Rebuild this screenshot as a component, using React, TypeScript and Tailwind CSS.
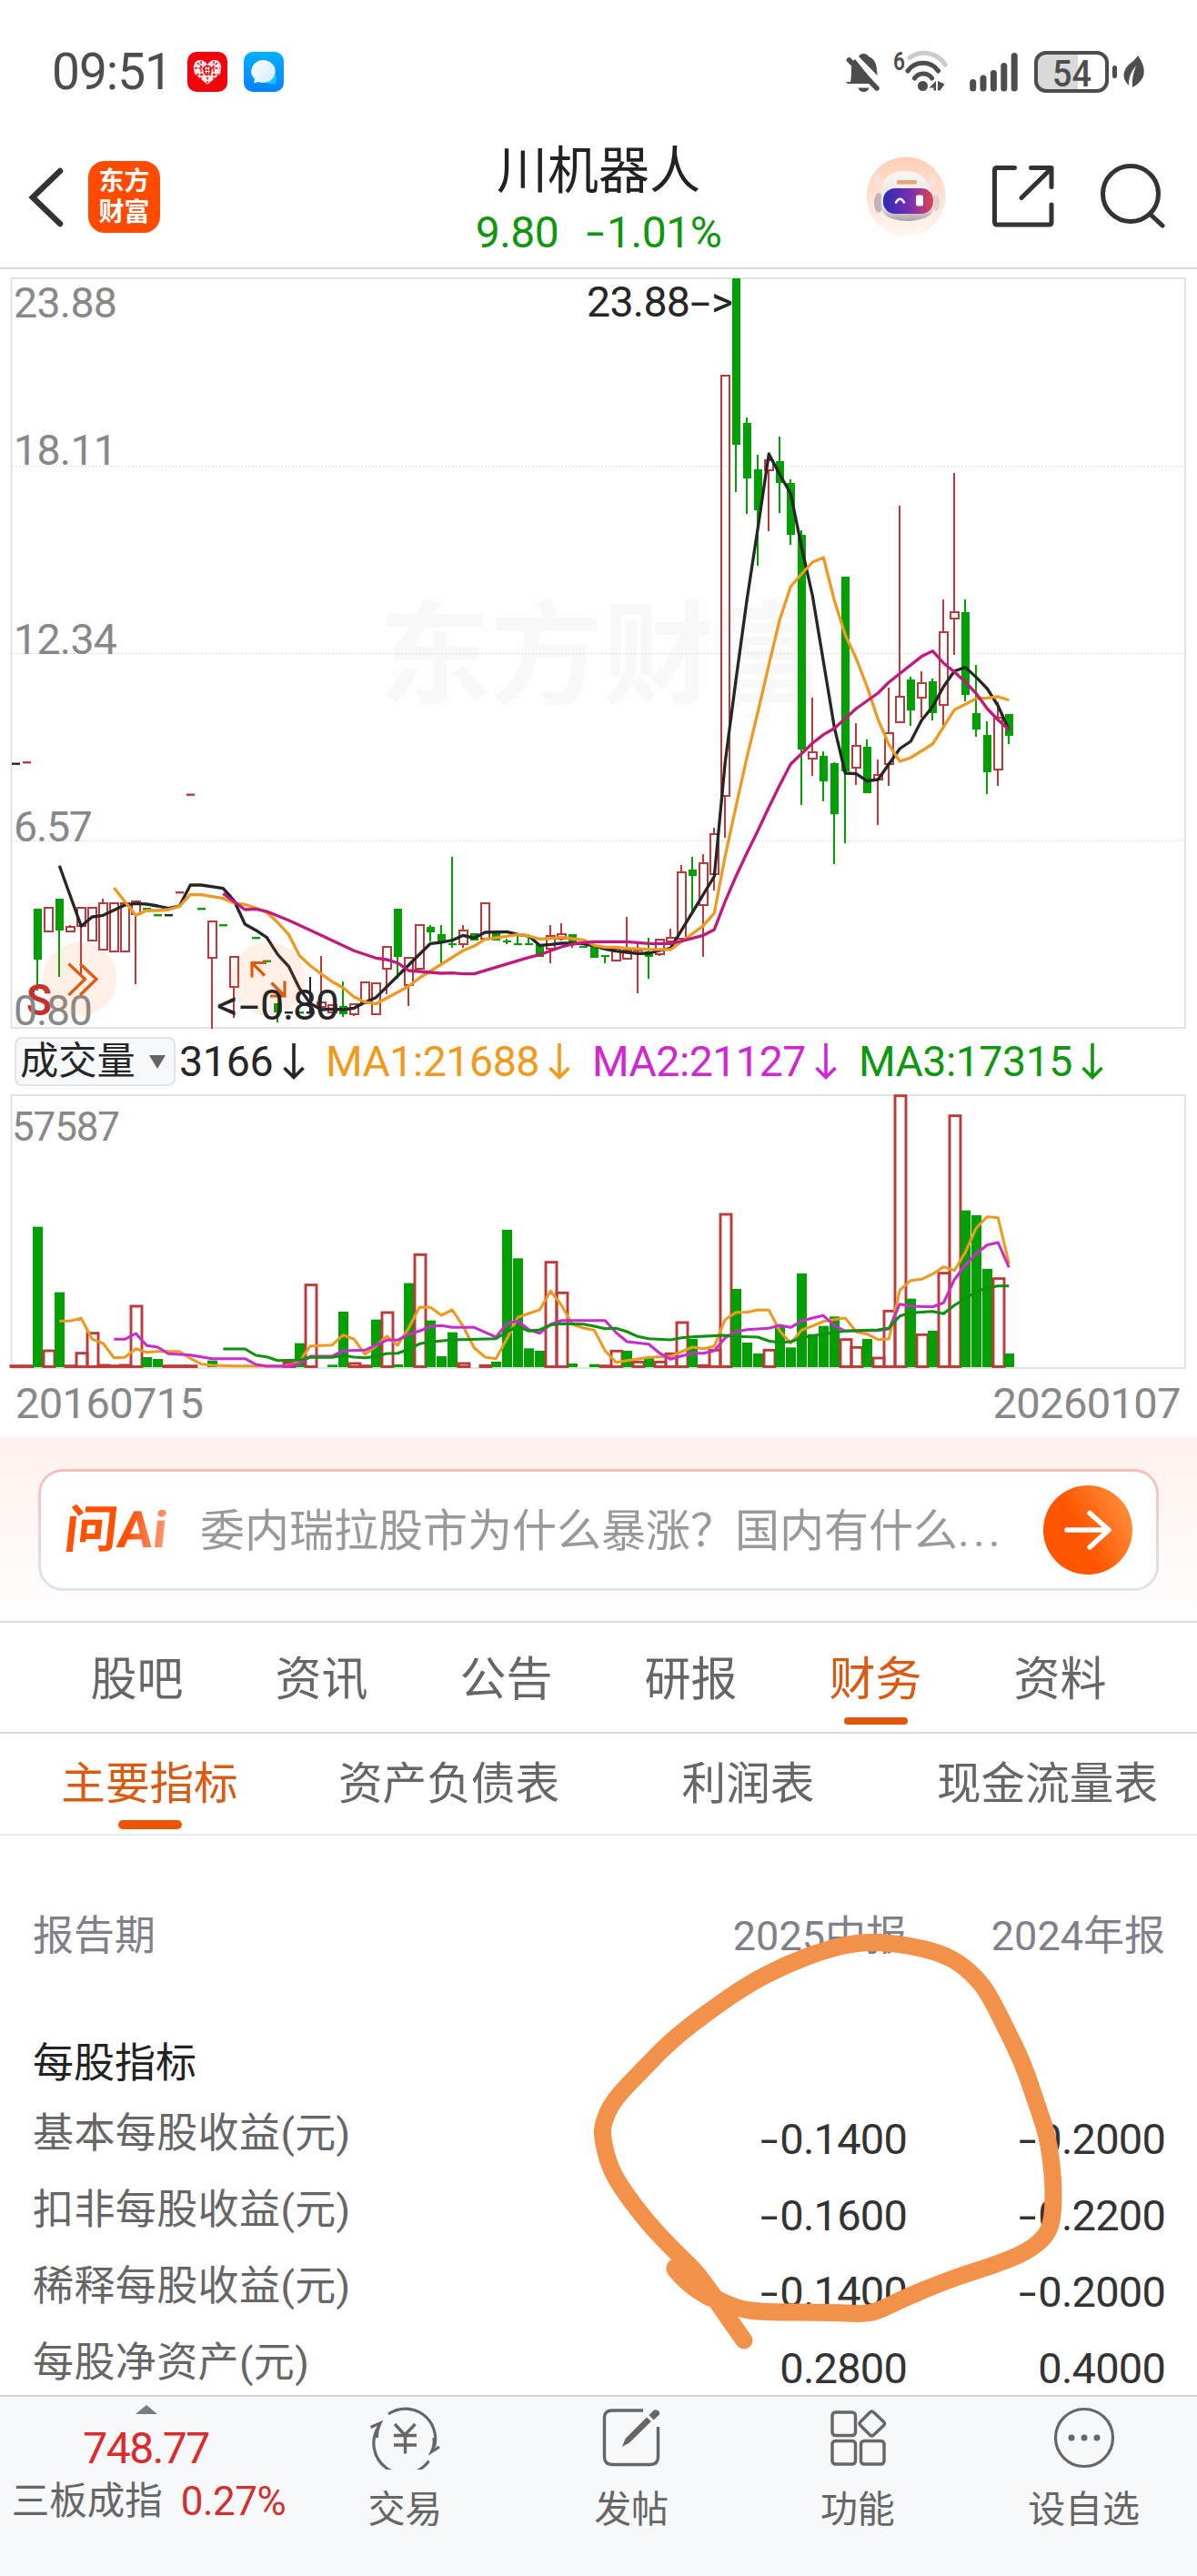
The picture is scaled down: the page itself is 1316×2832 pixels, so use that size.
import React from "react";

const RED = "#bb3b3b";
const GREEN = "#03a003";
const DARK = "#262626";

const px = (i: number) => 17 + 12 * i;

type Candle = [number, "r" | "g", number, number, number, number];

// index, colour, high, body top, body bottom, low
const candles: Candle[] = [
  [2, "g", 999, 999, 1055, 1089], [3, "r", 998, 998, 1024, 1024], [4, "g", 988, 988, 1023, 1074],
  [5, "r", 1017, 1019, 1024, 1024], [6, "r", 998, 998, 1018, 1073], [7, "r", 998, 998, 1034, 1034],
  [8, "r", 988, 993, 1044, 1044], [9, "r", 993, 993, 1046, 1046], [10, "r", 993, 993, 1046, 1046],
  [11, "r", 991, 991, 1005, 1082], [18, "r", 1013, 1013, 1053, 1131], [20, "r", 1052, 1052, 1085, 1119],
  [24, "g", 1103, 1103, 1113, 1124], [28, "r", 1051, 1102, 1107, 1107], [29, "r", 1105, 1105, 1113, 1113],
  [30, "g", 1079, 1106, 1115, 1118], [31, "r", 1104, 1104, 1115, 1117], [32, "r", 1080, 1080, 1103, 1103],
  [33, "r", 1081, 1081, 1115, 1115], [34, "r", 1041, 1041, 1065, 1093], [35, "g", 999, 999, 1052, 1076],
  [36, "r", 1053, 1053, 1083, 1106], [37, "r", 1017, 1017, 1065, 1065], [38, "g", 1017, 1019, 1025, 1035],
  [39, "g", 1017, 1027, 1036, 1059], [40, "g", 942, 1037, 1039, 1042], [41, "r", 1017, 1023, 1038, 1042],
  [42, "g", 1026, 1026, 1034, 1034], [43, "r", 993, 993, 1032, 1032], [44, "g", 1026, 1026, 1034, 1034],
  [45, "g", 1032, 1034, 1036, 1038], [46, "g", 1026, 1037, 1039, 1039], [47, "g", 1027, 1037, 1039, 1039],
  [48, "g", 1038, 1038, 1052, 1052], [49, "r", 1017, 1029, 1043, 1059], [50, "r", 1015, 1027, 1032, 1034],
  [51, "g", 1027, 1027, 1039, 1042], [52, "g", 1040, 1040, 1042, 1042], [53, "g", 1039, 1039, 1053, 1053],
  [54, "g", 1050, 1050, 1052, 1059], [55, "r", 1043, 1043, 1056, 1056], [56, "r", 1008, 1045, 1054, 1054],
  [57, "r", 1038, 1044, 1045, 1092], [58, "g", 1031, 1046, 1052, 1076], [59, "r", 1033, 1033, 1049, 1051],
  [60, "r", 1021, 1031, 1035, 1035], [61, "r", 951, 959, 1032, 1032], [62, "g", 942, 956, 963, 1002],
  [63, "r", 939, 949, 995, 1052], [64, "r", 910, 917, 961, 979], [65, "r", 413, 413, 875, 921],
  [66, "g", 306, 306, 489, 541], [67, "g", 459, 465, 526, 565], [68, "g", 500, 516, 561, 622],
  [69, "r", 506, 506, 517, 584], [70, "g", 480, 507, 531, 564], [71, "g", 527, 531, 588, 599],
  [72, "g", 583, 588, 824, 885], [73, "r", 767, 827, 834, 853], [74, "g", 826, 831, 859, 881],
  [75, "g", 838, 839, 895, 950], [76, "g", 634, 634, 848, 927], [77, "r", 795, 820, 844, 863],
  [78, "g", 813, 821, 872, 872], [79, "r", 835, 852, 857, 907], [80, "r", 756, 806, 840, 864],
  [81, "r", 556, 766, 794, 794], [82, "g", 744, 747, 781, 798], [83, "r", 738, 751, 767, 789],
  [84, "g", 746, 749, 784, 792], [85, "r", 659, 695, 775, 802], [86, "r", 520, 673, 680, 720],
  [87, "g", 659, 673, 764, 771], [88, "g", 731, 784, 802, 810], [89, "g", 793, 808, 849, 873],
  [90, "r", 772, 789, 846, 864], [91, "g", 785, 785, 809, 818],
];

// sessions that traded at a single price
const dashes: [number, number, string][] = [
  [0, 839.5, DARK], [1, 838, RED], [12, 999, GREEN], [13, 1006, GREEN], [14, 1006, DARK],
  [15, 981, RED], [16, 873.5, RED], [17, 999, GREEN], [19, 1017, GREEN], [22, 1031, GREEN],
  [23, 1056.5, GREEN], [25, 1113, DARK], [26, 1113, GREEN], [27, 1113, DARK],
];

type Pts = [number, number][];

const maBlack: Pts = [
  [4, 951.7], [6, 1018.3], [7, 1008], [8, 1006.3], [10, 995], [11, 993.3], [12, 994], [13, 996], [14, 998.7], [15, 996],
  [16, 973], [17, 973], [19, 976.7], [20, 990], [21, 1016], [22, 1022.7], [23, 1030.7], [24, 1049.3], [25, 1062.3],
  [26, 1086.7], [27, 1103.3], [28, 1110], [29, 1109.3], [30, 1110], [31, 1108.3], [32, 1101.7], [33, 1096.7], [36, 1061],
  [37, 1049], [38, 1037.3], [39, 1036], [40, 1033.7], [41, 1028.3], [42, 1031.3], [43, 1025], [45, 1024.3], [46, 1027.3],
  [47, 1029], [48, 1039.3], [49, 1038.3], [50, 1037], [51, 1037], [52, 1037.7], [53, 1040], [54, 1043.3], [55, 1045.7],
  [56, 1047], [57, 1048.3], [58, 1048], [59, 1045], [60, 1042.3], [64, 963.5], [65, 837.6], [66, 746], [67, 658.5],
  [68, 580], [69, 499], [70, 521.7], [71, 542.7], [72, 601.7], [73, 655], [74, 727.4], [75, 799.7], [76, 850],
  [77, 850.7], [78, 858.6], [79, 857], [80, 840], [81, 823], [82, 815], [83, 791.8], [84, 777], [85, 755], [86, 737.7],
  [87, 733.6], [88, 744.6], [89, 757], [90, 776], [91, 802.5],
];
const maOrange: Pts = [
  [9, 976], [10, 991.3], [11, 1006.3], [12, 1001], [13, 1001], [14, 1000], [15, 996.3], [16, 983.3], [17, 983.7],
  [19, 987.7], [20, 992.7], [21, 994.3], [22, 998.3], [23, 1003.3], [24, 1014], [25, 1027.3], [26, 1050.7], [27, 1061.7],
  [28, 1070.7], [29, 1079.3], [30, 1086], [31, 1096], [32, 1101.7], [33, 1103.7], [36, 1084.2], [37, 1075], [39, 1060],
  [41, 1045], [42, 1040], [43, 1032.7], [45, 1029.3], [46, 1027.3], [47, 1029], [48, 1032.3], [49, 1031.7], [50, 1030.3],
  [51, 1032], [52, 1033.3], [53, 1039.3], [54, 1041.3], [55, 1041.3], [56, 1042.7], [58, 1043.7], [60, 1044],
  [63, 1017.7], [64, 1003.8], [65, 941], [66, 885.8], [67, 832], [68, 782.5], [69, 731], [70, 681], [71, 644.8],
  [72, 631], [73, 618], [74, 613], [75, 660], [76, 698], [77, 724], [78, 755], [79, 791], [80, 818.7], [81, 837],
  [82, 833], [84, 818], [86, 780.4], [88, 768], [89, 767.4], [90, 766], [91, 769.8],
];
const maPink: Pts = [
  [19, 982.3], [21, 1000], [22, 999.3], [23, 1002], [25, 1011.7], [27, 1022.7], [29, 1034], [31, 1045.3], [33, 1053.3],
  [34, 1055], [35, 1058.7], [36, 1067], [39, 1070], [40, 1069.7], [41, 1070.7], [42, 1070.7], [44, 1063.3], [47, 1052.7],
  [48, 1049.7], [49, 1045.3], [50, 1041], [51, 1038], [52, 1036.3], [53, 1035.3], [56, 1035.3], [58, 1037.3],
  [60, 1037.3], [61, 1034.7], [63, 1028.3], [64, 1022], [65, 990.8], [66, 963], [67, 937.5], [68, 913], [69, 887.5],
  [70, 863], [71, 840], [73, 817], [74, 807.6], [75, 800.8], [76, 790], [77, 779], [79, 762], [80, 750], [81, 740.5],
  [83, 721.6], [84, 715.7], [85, 729], [86, 738.8], [87, 749.8], [88, 762.5], [89, 779], [90, 791.5], [91, 802],
];

// index, colour, bar top measured in thirds of a pixel below y=1130
const volumes: [number, "r" | "g", number][] = [
  [0, "r", 1115], [1, "r", 1115], [2, "g", 656], [3, "r", 1065], [4, "g", 872], [5, "r", 1115], [6, "r", 1073],
  [7, "r", 1007], [8, "r", 1113], [9, "r", 1115], [10, "r", 1113], [11, "r", 918], [12, "g", 1086], [13, "g", 1092],
  [14, "r", 1115], [15, "r", 1115], [16, "r", 1115], [18, "g", 1097], [25, "r", 1105], [26, "g", 1040], [27, "r", 848],
  [29, "g", 1111], [30, "g", 936], [31, "r", 1107], [32, "r", 1115], [33, "g", 962], [34, "r", 939], [35, "g", 1110],
  [36, "g", 842], [37, "r", 748], [38, "g", 965], [39, "g", 1083], [40, "g", 1004], [41, "r", 1107], [43, "r", 1114],
  [44, "g", 1101], [45, "g", 666], [46, "g", 760], [47, "g", 1057], [48, "g", 1065], [49, "r", 773], [50, "r", 874],
  [51, "g", 1107], [53, "g", 1109], [54, "r", 1115], [55, "r", 1066], [56, "g", 1065], [57, "r", 1102], [58, "g", 1087],
  [59, "r", 1102], [60, "r", 1075], [61, "r", 972], [62, "g", 1026], [63, "r", 1114], [64, "r", 1063], [65, "r", 615],
  [66, "g", 861], [67, "g", 1038], [68, "g", 1074], [69, "r", 1063], [70, "g", 985], [71, "g", 1054], [72, "g", 810],
  [73, "g", 1010], [74, "g", 983], [75, "g", 952], [76, "r", 1028], [77, "r", 1054], [78, "g", 1026], [79, "r", 1089],
  [80, "r", 934], [81, "r", 224], [82, "g", 893], [83, "r", 1012], [84, "g", 999], [85, "r", 809], [86, "r", 290],
  [87, "g", 602], [88, "g", 618], [89, "g", 795], [90, "r", 827], [91, "g", 1074],
];
const volOrange: Pts = [
  [4, 967], [5, 967], [6, 958], [7, 1027], [8, 1040], [9, 1088], [10, 1087], [11, 1058], [12, 1070], [13, 1067],
  [15, 1067], [16, 1090], [17, 1109], [18, 1113], [20, 1115], [25, 1115], [26, 1100], [27, 1049], [28, 1048],
  [29, 1046], [30, 1013], [31, 1027], [32, 1077], [33, 1050], [34, 1017], [35, 1047], [36, 990], [37, 921], [38, 922],
  [39, 948], [40, 930], [41, 985], [42, 1055], [43, 1086], [44, 1091], [45, 1025], [46, 955], [47, 942], [48, 930],
  [49, 868], [50, 915], [51, 978], [52, 990], [53, 997], [54, 1065], [55, 1103], [56, 1097], [57, 1092], [58, 1087],
  [60, 1084], [61, 1068], [62, 1053], [63, 1058], [64, 1050], [65, 962], [66, 938], [67, 938], [68, 930], [69, 931],
  [70, 1000], [71, 1040], [72, 997], [73, 983], [74, 968], [75, 962], [76, 957], [77, 1003], [78, 1010], [79, 1028],
  [80, 1026], [81, 865], [82, 833], [83, 829], [84, 812], [85, 788], [86, 800], [87, 740], [88, 660], [89, 623],
  [90, 626], [91, 778],
];
const volPink: Pts = [
  [9, 1027], [10, 1027], [11, 1008], [12, 1048], [13, 1053], [14, 1075], [15, 1077], [16, 1079], [18, 1091], [21, 1091],
  [22, 1110], [23, 1116], [25, 1116], [26, 1107], [27, 1083], [29, 1083], [30, 1065], [32, 1063], [34, 1030],
  [35, 1030], [36, 1010], [37, 1000], [38, 985], [39, 982], [40, 988], [42, 988], [43, 1004], [44, 1020], [45, 975],
  [46, 967], [47, 995], [48, 1007], [49, 978], [50, 965], [54, 965], [55, 1005], [56, 1035], [58, 1043], [59, 1073],
  [60, 1093], [61, 1082], [62, 1073], [63, 1073], [64, 1065], [65, 1022], [66, 1002], [67, 995], [69, 991], [70, 981],
  [71, 988], [72, 967], [73, 957], [74, 949], [75, 982], [76, 1000], [79, 998], [80, 993], [81, 911], [82, 918],
  [84, 920], [85, 907], [86, 830], [87, 782], [88, 745], [89, 716], [90, 708], [91, 790],
];
const volGreen: Pts = [
  [19, 1059], [21, 1059], [22, 1080], [23, 1085], [24, 1097], [26, 1096], [27, 1087], [29, 1087], [30, 1080],
  [31, 1086], [32, 1088], [33, 1084], [34, 1074], [35, 1073], [36, 1060], [37, 1042], [38, 1036], [40, 1029],
  [44, 1025], [45, 1002], [46, 985], [47, 1000], [48, 996], [49, 980], [50, 976], [52, 977], [53, 984], [54, 992],
  [55, 991], [56, 1002], [57, 1018], [58, 1025], [60, 1029], [61, 1022], [62, 1019], [65, 1014], [66, 1018],
  [68, 1020], [69, 1033], [70, 1038], [71, 1035], [72, 1022], [74, 1010], [76, 1000], [79, 996], [80, 990], [81, 950],
  [82, 940], [84, 935], [85, 943], [86, 915], [87, 893], [88, 870], [89, 858], [90, 851], [91, 851],
];

const line = (pts: Pts, f: (y: number) => number = (y) => y) =>
  pts.map(([i, y]) => `${px(i) + 0.3},${f(y).toFixed(1)}`).join(" ");
const vy = (v: number) => 1130 + v / 3;

const markPoints: Pts = [
  [178, 463], [149, 422], [128, 390], [103, 366], [73, 335], [42, 294], [29, 269], [22, 239], [23, 224], [34, 199], [65, 167],
  [99, 132], [141, 100], [183, 71], [224, 50], [266, 34], [304, 25], [342, 26], [384, 34], [413, 46], [438, 69],
  [451, 90], [466, 120], [485, 159], [500, 204], [512, 239], [518, 284], [518, 324], [512, 347], [489, 366],
  [451, 381], [409, 394], [355, 416], [325, 431], [308, 434], [271, 432], [199, 432], [170, 428], [141, 414],
  [120, 401], [104, 384],
];
const smooth = (p: Pts) => {
  let d = `M${p[0][0]} ${p[0][1]}`;
  for (let k = 1; k < p.length - 1; k++) {
    const mx = (p[k][0] + p[k + 1][0]) / 2;
    const my = (p[k][1] + p[k + 1][1]) / 2;
    d += ` Q${p[k][0]} ${p[k][1]} ${mx} ${my}`;
  }
  const e = p[p.length - 1];
  return `${d} L${e[0]} ${e[1]}`;
};

function StatusBar() {
  return (
    <div className="flex h-[158px] items-center pl-[57px] text-[#4d4d4d]">
      <span className="w-[149px] text-[55px] leading-none tracking-[-1px]">09:51</span>
      <svg className="h-[44px] w-[44px]" viewBox="0 0 44 44">
        <rect width="44" height="44" rx="10" fill="#f2040c" />
        <path d="M22 36 L8 24 Q5 14 10 10 Q17 7 22 14 Q27 7 34 10 Q39 14 36 24 Z" fill="#ffe9ea" />
        <path d="M8 18 H36 M10 25 H34 M15 10 V30 M22 14 V35 M29 10 V30 M11 12 L19 20 M33 12 L25 20" stroke="#f2040c" strokeWidth="1.3" strokeDasharray="3 1.5" />
        <rect x="17.5" y="15" width="9" height="10" rx="4" fill="#f2040c" />
        <path d="M19 18 H25 M19 21.5 H25 M20.7 16.5 V24 M23.4 16.5 V24" stroke="#fff" strokeWidth="1" />
      </svg>
      <svg className="ml-[18px] h-[44px] w-[44px]" viewBox="0 0 44 44">
        <defs>
          <linearGradient id="msg" x1="0" y1="0" x2="0" y2="1">
            <stop offset="0" stopColor="#04b0ff" />
            <stop offset="1" stopColor="#0680ff" />
          </linearGradient>
          <linearGradient id="bub" x1="0" y1="0" x2="1" y2="1">
            <stop offset="0" stopColor="#fff" />
            <stop offset="1" stopColor="#cfeaff" />
          </linearGradient>
        </defs>
        <rect width="44" height="44" rx="10" fill="url(#msg)" />
        <path d="M34 24 Q38 29 35 33 L35 36 L31 35 Q26 36 22 32 Z" fill="#10c8ff" />
        <path d="M20.500 9 A13.500 12.500 0 1 1 16 33 L11 34.500 L12 30 A13.500 12.500 0 0 1 20.500 9Z" fill="url(#bub)" />
      </svg>
      <svg className="ml-[612px] h-[52px] w-[340px]" viewBox="924 52 340 52">
        <g fill="#4d4d4d">
          <path d="M935 89 Q936 85 936 75 Q936 67 940 64 L962 91 H934 Q930 91 930.500 89Z" />
          <path d="M944 61 Q946 58 949.500 58 Q953 58 955 61 Q963 64 964 75 L964.500 82Z" />
          <path d="M943.500 95.500 H955.500 Q954 100 949.500 100 Q945 100 943.500 95.500Z" />
          <circle cx="1014.500" cy="93.500" r="5.500" />
          <path d="M1029 88 V98.500 H1026.500 V95.500 H1021.500Z M1031 88 L1038.500 91.500 L1033.800 98 V98.500 H1031Z" />
        </g>
        <path d="M933.500 65 L964 96" stroke="#4d4d4d" strokeWidth="5.500" strokeLinecap="round" />
        <g fill="none" strokeWidth="5" strokeLinecap="round">
          <path d="M1000 62.500 A27 27 0 0 1 1039 70" stroke="#cbcbcb" />
          <path d="M998 77 A20.500 20.500 0 0 1 1031.500 77" stroke="#4d4d4d" />
          <path d="M1005.500 85 A11.500 11.500 0 0 1 1024.500 85" stroke="#4d4d4d" />
        </g>
        <text x="982" y="76" fontSize="27" fontWeight="600" textLength="13" lengthAdjust="spacingAndGlyphs" fill="#4d4d4d">6</text>
        <path d="M1069.700 89.500 V96 M1081 85 V96 M1092.400 79.500 V96 M1103.800 71.500 V96 M1115.200 60.500 V96" stroke="#4d4d4d" strokeWidth="7" strokeLinecap="round" />
        <path d="M1185 58 H1151 Q1140 58 1140 69 V87 Q1140 98 1151 98 H1185Z" fill="#dadada" />
        <rect x="1139" y="57" width="78" height="42" rx="11" fill="none" stroke="#4d4d4d" strokeWidth="4" />
        <text x="1157" y="93.500" fontSize="41" fontWeight="500" textLength="43" lengthAdjust="spacingAndGlyphs" fill="#4d4d4d">54</text>
        <path d="M1225.500 73.500 V82.500" stroke="#4d4d4d" strokeWidth="5" strokeLinecap="round" />
        <path d="M1251 60 Q1264 79 1252 90 Q1248 94 1245 95 Q1244 84 1249 71 Q1240 82 1241 93 Q1230 82 1241 70 Q1248 65 1251 60Z" fill="#4d4d4d" />
      </svg>
    </div>
  );
}

function Robot() {
  return (
    <svg className="h-[88px] w-[88px]" viewBox="0 0 88 88">
      <defs>
        <linearGradient id="halo" x1="0" y1="0" x2="0" y2="1">
          <stop offset="0" stopColor="#ffceb5" />
          <stop offset="1" stopColor="#fff6f2" />
        </linearGradient>
        <linearGradient id="visor" x1="0" y1="0" x2="1" y2="0">
          <stop offset="0" stopColor="#2b2bb5" />
          <stop offset=".55" stopColor="#7b2fb0" />
          <stop offset="1" stopColor="#e04452" />
        </linearGradient>
        <linearGradient id="shell" x1="0" y1="0" x2="0" y2="1">
          <stop offset="0" stopColor="#fbf7f5" />
          <stop offset=".75" stopColor="#e4dee0" />
          <stop offset="1" stopColor="#a8a1a5" />
        </linearGradient>
      </defs>
      <circle cx="44" cy="44" r="43.500" fill="url(#halo)" />
      <path d="M12 17 Q7 26 14 32 L22 30 Q13 26 12 17Z M73 17 Q79 26 73 32 L65 30 Q74 26 73 17Z" fill="#eee4e0" />
      <ellipse cx="14" cy="51" rx="5" ry="11" fill="#bdb5b9" />
      <ellipse cx="77" cy="51" rx="4" ry="9" fill="#ddd2d2" />
      <path d="M17 44 Q16 16 43 16 Q68 16 73 42 Q79 62 66 67 Q46 75 25 67 Q14 62 17 44Z" fill="url(#shell)" />
      <rect x="34" y="26" width="22" height="4.500" rx="1.500" fill="#e3a873" />
      <rect x="19" y="35" width="55" height="28" rx="13" fill="url(#visor)" />
      <path d="M33 50.500 Q37.500 43 42 50.500" fill="none" stroke="#fff" strokeWidth="2.500" strokeLinecap="round" />
      <rect x="55" y="42.500" width="8" height="12" rx="2" fill="#fff" />
    </svg>
  );
}

function Header() {
  return (
    <header className="flex h-[138px] items-start border-b-2 border-[#d9d9d9] pl-[30px] pr-[32px]">
      <svg className="mt-[26px] h-[66px] w-[40px]" viewBox="0 0 40 66">
        <path d="M36 4 L6 33 L36 62" fill="none" stroke="#333" strokeWidth="6.500" strokeLinecap="round" />
      </svg>
      <div className="ml-[27px] mt-[19px] flex h-[79px] w-[79px] flex-col items-center justify-center rounded-[18px] bg-[#ff4a00] text-[28px] font-bold leading-[34px] text-white">
        <span>东方</span>
        <span>财富</span>
      </div>
      <div className="ml-[312px] flex h-full w-[340px] flex-col items-center">
        <span className="text-[56px] leading-[60px] text-[#222]">川机器人</span>
        <span className="mt-[8px] flex gap-[38px] text-[48px] leading-[60px] tracking-[-0.500px] text-[#109610]">
          <span>9.80</span>
          <span>
            <span className="inline-block origin-right scale-x-150 pr-[2px]">-</span>1.01%
          </span>
        </span>
      </div>
      <div className="ml-auto mt-[14px] flex items-center">
        <Robot />
        <svg className="ml-[49px] h-[72px] w-[72px]" viewBox="1089 181 72 72" fill="none" stroke="#333" strokeWidth="5" strokeLinecap="round" strokeLinejoin="round">
          <path d="M1115.500 185.500 H1096 Q1093.500 185.500 1093.500 188 V245 Q1093.500 248 1096 248 H1153.500 Q1156 248 1156 245 V226" />
          <path d="M1133.500 185.500 H1156 V206.500 M1155 187 L1123 218.500" />
        </svg>
        <svg className="ml-[48px] h-[74px] w-[75px]" viewBox="1210 179 75 74" fill="none" stroke="#333" strokeWidth="5" strokeLinecap="round">
          <circle cx="1244" cy="213" r="30.500" />
          <path d="M1266 236 L1279 248" />
        </svg>
      </div>
    </header>
  );
}

function PriceChart() {
  return (
    <svg className="block h-[841px] w-full" viewBox="0 296 1316 841">
      <text x="416" y="764" fontSize="123" fontWeight="700" fill="#f8f8f8">东方财富</text>
      <rect x="12.500" y="306" width="1290.500" height="824" fill="none" stroke="#e3e3e3" strokeWidth="2" />
      <path d="M13 512.500 H1303 M13 718.500 H1303 M13 924.500 H1303" stroke="#dcdcdc" strokeWidth="1" strokeDasharray="2 2" />
      {candles.map(([i, c, h, t, b, l]) => {
        const x = px(i);
        const col = c === "r" ? RED : GREEN;
        return (
          <g key={i} stroke={col} strokeWidth="2">
            {h < t && <line x1={x} x2={x} y1={h} y2={t} />}
            {l > b && <line x1={x} x2={x} y1={b} y2={l} />}
            {c === "r" ? (
              <rect x={x - 4} y={t} width="9" height={Math.max(b - t, 1)} fill="none" />
            ) : (
              <rect x={x - 4} y={t} width="9" height={b - t} fill={GREEN} stroke="none" />
            )}
          </g>
        );
      })}
      <path d={`M${px(27)} 1074 V1113`} stroke={DARK} strokeWidth="2" />
      {dashes.map(([i, y, c]) => (
        <rect key={i} x={px(i) - 4} y={y - 1} width="9" height="2.400" fill={c} />
      ))}
      <g fontSize="46.500" fill="#888">
        <text x="15" y="349" textLength="114">23.88</text>
        <text x="15" y="511" textLength="114">18.11</text>
        <text x="15" y="719" textLength="114">12.34</text>
        <text x="15" y="925" textLength="87">6.57</text>
      </g>
      <text x="29" y="1116" fontSize="48" fontWeight="600" textLength="28" lengthAdjust="spacingAndGlyphs" fill="#c43030">S</text>
      <text x="15" y="1126.500" fontSize="46.500" textLength="87" fill="#888">0.80</text>
      <g fill="none" strokeWidth="3.300" strokeLinejoin="round">
        <polyline points={line(maBlack)} stroke={DARK} />
        <polyline points={line(maOrange)} stroke="#ec9a22" />
        <polyline points={line(maPink)} stroke="#c01a7c" />
      </g>
      <g fill="#ff6a20" fillOpacity=".1">
        <circle cx="87.700" cy="1076.300" r="40.500" />
        <circle cx="294.700" cy="1076.300" r="40.500" />
      </g>
      <g fill="none" stroke="#e05a10" strokeWidth="3.200">
        <path d="M75.500 1059.500 L93.500 1076.500 L75.500 1094 M88 1059.500 L106 1076.500 L88 1094" />
        <path d="M293 1058.500 H277 V1074.500 M277.500 1059 L291 1072.500 M297 1095 H313 V1078.500 M312.500 1094.500 L298.500 1080.500" />
      </g>
      <g fontSize="46.500" fill={DARK}>
        <text x="645" y="348" textLength="114">23.88</text>
        <text x="759" y="348" textLength="22" lengthAdjust="spacingAndGlyphs">-</text>
        <text x="782" y="348" textLength="24" lengthAdjust="spacingAndGlyphs">&gt;</text>
        <text x="238" y="1121" textLength="24" lengthAdjust="spacingAndGlyphs">&lt;</text>
        <text x="263" y="1121" textLength="22" lengthAdjust="spacingAndGlyphs">-</text>
        <text x="286" y="1121" textLength="87">0.80</text>
      </g>
    </svg>
  );
}

function DownArrow() {
  return (
    <svg className="ml-[11px] mr-[24px] h-[42px] w-[24px] shrink-0" viewBox="0 0 24 42" fill="none" stroke="currentColor" strokeWidth="3.600">
      <path d="M12 1 V39 M1.500 28 L12 38.500 L22.500 28" />
    </svg>
  );
}

function Legend() {
  const items = [
    { t: "MA1:21688", c: "text-[#f09a1c]" },
    { t: "MA2:21127", c: "text-[#cf28d0]" },
    { t: "MA3:17315", c: "text-[#0f980f]" },
  ];
  return (
    <div className="flex h-[61px] items-center pb-[1px] pl-[16px]">
      <div className="flex h-[54px] w-[177px] shrink-0 items-center justify-between rounded-[8px] border-2 border-[#e2e4e8] bg-[#f7f8fa] pl-[4px] pr-[9px] text-[42.300px] leading-[50px] text-[#262626]">
        <span>成交量</span>
        <svg className="h-[15px] w-[18px]" viewBox="0 0 18 15">
          <path d="M0 0 H18 L9 15Z" fill="#666" />
        </svg>
      </div>
      <div className="ml-[4px] flex w-[161px] shrink-0 items-center text-[#262626]">
        <span className="w-[103px] whitespace-nowrap text-[46.500px] leading-[58px] tracking-[-0.300px]">3166</span>
        <DownArrow />
      </div>
      {items.map((m) => (
        <div key={m.t} className={`flex w-[293px] shrink-0 items-center ${m.c}`}>
          <span className="w-[234px] whitespace-nowrap text-[46.500px] leading-[58px] tracking-[-0.500px]">{m.t}</span>
          <DownArrow />
        </div>
      ))}
    </div>
  );
}

function VolumeChart() {
  return (
    <svg className="block h-[382px] w-full" viewBox="0 1198 1316 382">
      <rect x="12.500" y="1204" width="1290.500" height="300" fill="none" stroke="#e3e3e3" strokeWidth="2" />
      {volumes.map(([i, c, v]) => {
        const x = px(i);
        const t = vy(v);
        return c === "g" ? (
          <rect key={i} x={x - 5} y={t} width="11" height={1503 - t} fill={GREEN} />
        ) : (
          <rect key={i} x={x - 5} y={t} width="12" height={Math.max(1502.500 - t, 0.500)} fill="none" stroke={RED} strokeWidth="2.900" />
        );
      })}
      <g fill="none" strokeWidth="3.100" strokeLinejoin="round">
        <polyline points={line(volOrange, vy)} stroke="#ec9a22" />
        <polyline points={line(volPink, vy)} stroke="#c82ccc" />
        <polyline points={line(volGreen, vy)} stroke="#109010" />
      </g>
      <g fill="#888">
        <text x="13" y="1254" fontSize="44" textLength="119">57587</text>
        <text x="17" y="1559" fontSize="47" textLength="207">20160715</text>
        <text x="1091.500" y="1559" fontSize="47" textLength="207">20260107</text>
      </g>
    </svg>
  );
}

function AskBar() {
  return (
    <section className="h-[204px] border-b-2 border-[#dadada] bg-linear-to-b from-[#fff1ed] to-[#fefefe] px-[42px] pt-[35px]">
      <div className="h-[134px] rounded-[27px] bg-linear-to-b from-[#f6bfb8] to-[#dde4f2] p-[3px]">
        <div className="flex h-full items-center rounded-[24px] bg-white pl-[26px] pr-[26px]">
          <span className="w-[149px] shrink-0">
            <span className="inline-block origin-left scale-x-105 -skew-x-6 bg-linear-to-r from-[#ff5200] from-60% to-[#ffa078] bg-clip-text pr-[6px] text-[56px] font-bold leading-[70px] tracking-[-0.500px] text-transparent">
              问Ai
            </span>
          </span>
          <span className="whitespace-nowrap pt-[3px] text-[49px] leading-[70px] text-[#999]">
            委内瑞拉股市为什么暴涨？国内有什么<span className="tracking-[4px]">...</span>
          </span>
          <svg className="ml-auto h-[98px] w-[98px] shrink-0" viewBox="0 0 98 98">
            <defs>
              <linearGradient id="go" x1="0" y1=".6" x2="1" y2=".1">
                <stop offset=".35" stopColor="#ff5500" />
                <stop offset="1" stopColor="#ff9644" />
              </linearGradient>
            </defs>
            <circle cx="49" cy="49" r="49" fill="url(#go)" />
            <path d="M26 49 H71 M51 30.500 L72 49 L51 68" fill="none" stroke="#fff" strokeWidth="5.500" strokeLinecap="round" strokeLinejoin="round" />
          </svg>
        </div>
      </div>
    </section>
  );
}

function Tabs() {
  const main = ["股吧", "资讯", "公告", "研报", "财务", "资料"];
  const sub = ["主要指标", "资产负债表", "利润表", "现金流量表"];
  return (
    <>
      <nav className="grid h-[122px] grid-cols-6 border-b-2 border-[#dadada] px-[49px] text-[51px]">
        {main.map((t) => (
          <div key={t} className={`flex flex-col items-center ${t === "财务" ? "text-[#db5a12]" : "text-[#666]"}`}>
            <span className="mt-[28px] leading-[70px]">{t}</span>
            {t === "财务" && <span className="mt-[6px] h-[8px] w-[70px] rounded-[4px] bg-[#e0570e]" />}
          </div>
        ))}
      </nav>
      <nav className="grid h-[112px] grid-cols-4 border-b-2 border-[#ececec] text-[48.600px]">
        {sub.map((t, k) => (
          <div key={t} className={`flex flex-col items-center ${k === 0 ? "text-[#db5a12]" : "text-[#666]"}`}>
            <span className="mt-[21px] whitespace-nowrap leading-[70px]">{t}</span>
            {k === 0 && <span className="mt-[4px] h-[10px] w-[70px] rounded-[5px] bg-[#ea5504]" />}
          </div>
        ))}
      </nav>
    </>
  );
}

function Num({ v }: { v: string }) {
  const neg = v.startsWith("-");
  return (
    <span className="text-right text-[47px] leading-[84px] tracking-[-0.800px] text-[#333]">
      {neg && <span className="inline-block origin-right scale-x-150 pr-[2px]">-</span>}
      {neg ? v.slice(1) : v}
    </span>
  );
}

function Report() {
  const rows = [
    ["基本每股收益(元)", "-0.1400", "-0.2000"],
    ["扣非每股收益(元)", "-0.1600", "-0.2200"],
    ["稀释每股收益(元)", "-0.1400", "-0.2000"],
    ["每股净资产(元)", "0.2800", "0.4000"],
  ];
  return (
    <section className="relative h-[615px] pl-[36px] pr-[35px] pt-[69px] text-[45px]">
      <div className="grid grid-cols-[680px_281px_284px] leading-[84px] text-[#80808a]">
        <span>报告期</span>
        <span className="text-right">2025中报</span>
        <span className="text-right">2024年报</span>
      </div>
      <div className="mt-[56px] leading-[84px] text-[#222]">每股指标</div>
      <div className="-mt-[7px]">
        {rows.map((r) => (
          <div key={r[0]} className="grid h-[84px] grid-cols-[680px_281px_284px] text-[#666]">
            <span className="leading-[84px] tracking-[0.400px]">{r[0]}</span>
            <span className="mt-[6px] grid"><Num v={r[1]} /></span>
            <span className="mt-[6px] grid"><Num v={r[2]} /></span>
          </div>
        ))}
      </div>
      <svg className="pointer-events-none absolute left-[640px] top-[92px] h-[480px] w-[540px]" viewBox="0 0 540 480" fill="none" stroke="#f2924a" strokeLinecap="round" strokeLinejoin="round">
        <path d={smooth(markPoints)} strokeWidth="19" />
        <path d="M104 384 Q118 402 141 414 M125 392 L142 414" strokeWidth="23" />
      </svg>
    </section>
  );
}

function BottomBar() {
  const cell = "flex w-[248.750px] flex-col items-center pt-[10px]";
  const label = "mt-[11px] text-[41px] leading-[66px] text-[#666]";
  const icon = "h-[70px] w-[80px]";
  return (
    <footer className="flex h-[199px] border-t-2 border-[#d2d4d9] bg-[#f7f8fa]">
      <div className="flex w-[321px] flex-col items-center pt-[9px]">
        <svg className="h-[10px] w-[24px]" viewBox="0 0 24 10">
          <path d="M12 0 L24 10 H0Z" fill="#7a7a82" />
        </svg>
        <span className="mt-[8px] text-[48px] leading-[60px] tracking-[-1.500px] text-[#d92c2c]">748.77</span>
        <span className="flex gap-[20px] whitespace-nowrap pl-[6px] text-[41.500px] leading-[56px] text-[#666]">
          三板成指
          <span className="text-[44px] tracking-[-0.500px] text-[#d22f2f]">0.27%</span>
        </span>
      </div>
      <div className={cell}>
        <svg className={icon} viewBox="405 2645 80 70" fill="none" stroke="#666" strokeWidth="3.200">
          <path d="M427 2654 A33 33 0 0 1 477.500 2690 M471.500 2705.500 A33 33 0 0 1 417 2667" />
          <path d="M477 2680 Q478 2688 474.500 2695.500 L483 2690 M407.500 2668.500 L418 2664 Q414 2672 414.500 2680" />
          <path d="M434 2665 L445 2677 L456.500 2665 M445.500 2677 V2697.500 M433 2677.500 H458 M433 2688 H458" strokeWidth="3.400" />
        </svg>
        <span className={label}>交易</span>
      </div>
      <div className={cell}>
        <svg className={icon} viewBox="654 2645 80 70" fill="none" stroke="#666" strokeWidth="3.400">
          <path d="M707 2650 H673 Q664.500 2650 664.500 2658 V2701 Q664.500 2709.500 673 2709.500 H715 Q723.500 2709.500 723.500 2701 V2668" />
          <path d="M684 2690 L687.500 2681 L711 2657.500 L716 2662 L692 2685.500Z M713.500 2655 L719 2649.500 Q722 2648.500 724.500 2651 Q726 2653.500 724 2655.500 L718.500 2660.500Z" fill="#666" stroke="none" />
        </svg>
        <span className={label}>发帖</span>
      </div>
      <div className={cell}>
        <svg className={icon} viewBox="902 2645 80 70" fill="none" stroke="#666" strokeWidth="3.400">
          <rect x="914" y="2652" width="25.500" height="25.500" rx="3.500" />
          <rect x="914" y="2683.500" width="25.500" height="25.500" rx="3.500" />
          <rect x="945.500" y="2683.500" width="25.500" height="25.500" rx="3.500" />
          <path d="M955.500 2652 Q957.500 2650 959.500 2652 L970.500 2662.500 Q972.500 2664.500 970.500 2666.500 L959.500 2677 Q957.500 2679 955.500 2677 L945 2666.500 Q943 2664.500 945 2662.500Z" />
        </svg>
        <span className={label}>功能</span>
      </div>
      <div className={cell}>
        <svg className={icon} viewBox="1151 2645 80 70" fill="none" stroke="#666" strokeWidth="3.200">
          <circle cx="1191" cy="2680" r="31.500" />
          <path d="M1177 2680 h.01 M1191 2680 h.01 M1205 2680 h.01" strokeWidth="7" strokeLinecap="round" />
        </svg>
        <span className={label}>设自选</span>
      </div>
    </footer>
  );
}

export default function App() {
  return (
    <main className="h-[2832px] w-[1316px] overflow-hidden bg-[#fefefe] font-['Roboto','Noto_Sans_CJK_SC',sans-serif]">
      <StatusBar />
      <Header />
      <PriceChart />
      <Legend />
      <VolumeChart />
      <AskBar />
      <Tabs />
      <Report />
      <BottomBar />
    </main>
  );
}
